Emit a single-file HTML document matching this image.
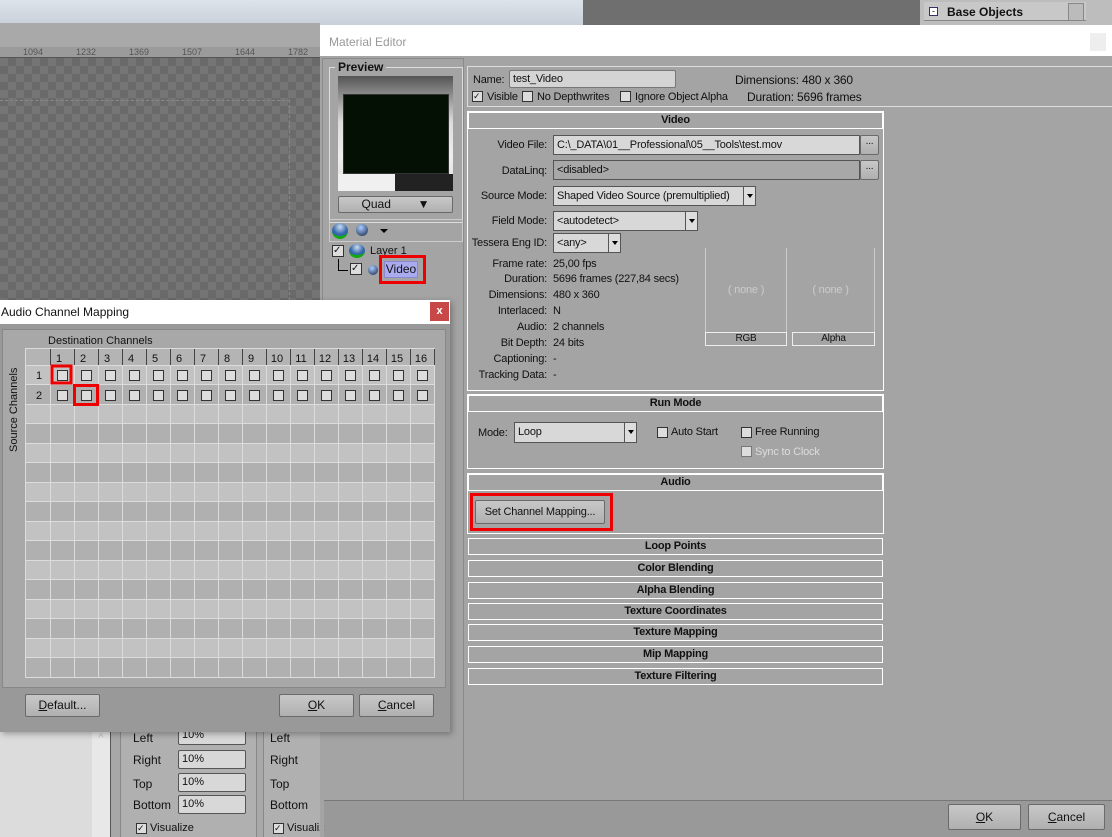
<!DOCTYPE html>
<html><head><meta charset="utf-8"><style>
*{box-sizing:border-box;margin:0;padding:0}
body{width:1112px;height:837px;overflow:hidden;position:relative;background:#a4a4a4;font-family:"Liberation Sans",sans-serif;font-size:11px;color:#111}
.a{position:absolute}
.me{letter-spacing:-0.2px}
.btn{position:absolute;border:1px solid #6a6a6a;border-radius:2px;background:linear-gradient(#c8c8c8,#b0b0b0);text-align:center;font-size:12px}
.cb{position:absolute;width:11px;height:11px;border:1px solid #333;background:#ddd}
.sec{position:absolute;left:468px;width:415px;height:17px;border:1px solid #fff;text-align:center;font-weight:bold;font-size:11px;line-height:15px}
.r{position:absolute;text-align:right;width:80px;left:467px}
.v{position:absolute;left:553px}
.inp{position:absolute;background:#d8d8d8;border:1px solid #555;font-size:11px;padding-left:3px;line-height:18px;height:20px}
.dd{position:absolute;right:0;top:0;width:12px;height:100%;border-left:1px solid #555;background:#ddd}
.dd:after{content:"";position:absolute;left:3px;top:7px;border:3px solid transparent;border-top:4px solid #000}
</style></head><body>
<div class="a" style="left:0;top:0;width:583px;height:25px;background:linear-gradient(#dde3ea,#c8d0da)"></div>
<div class="a" style="left:583px;top:0;width:337px;height:25px;background:#6f6f6f"></div>
<div class="a" style="left:920px;top:0;width:192px;height:25px;background:#bdbdbd"></div>
<div class="a" style="left:924px;top:2px;width:162px;height:19px;background:#c8c8c8;border-bottom:1px solid #888"></div>
<div class="a" style="left:929px;top:7px;width:9px;height:9px;border:1px solid #336;background:#fff;font-size:9px;line-height:6px;text-align:center">-</div>
<div class="a" style="left:947px;top:5px;font-weight:bold;font-size:12px">Base Objects</div>
<div class="a" style="left:1068px;top:3px;width:16px;height:18px;background:#bbb;border:1px solid #888"></div>
<div class="a" style="left:0;top:23px;width:320px;height:24px;background:#a9a9a9"></div>
<div class="a" style="left:0;top:47px;width:320px;height:11px;background:#9b9b9b;border-bottom:1px solid #555;font-size:9px;color:#555">
<span class="a" style="left:23px;top:0">1094</span><span class="a" style="left:76px">1232</span><span class="a" style="left:129px">1369</span><span class="a" style="left:182px">1507</span><span class="a" style="left:235px">1644</span><span class="a" style="left:288px">1782</span></div>
<div class="a" style="left:0;top:58px;width:320px;height:242px;background-color:#757575;background-image:linear-gradient(45deg,#6a6a6a 25%,transparent 25%,transparent 75%,#6a6a6a 75%),linear-gradient(45deg,#6a6a6a 25%,transparent 25%,transparent 75%,#6a6a6a 75%);background-size:16px 16px;background-position:0 0,8px 8px"></div>
<div class="a" style="left:0;top:100px;width:290px;height:200px;border-top:1px dashed #888;border-right:1px dashed #888"></div>

<div class="a" style="left:320px;top:25px;width:792px;height:812px;background:#a4a4a4"></div>
<div class="a" style="left:320px;top:25px;width:792px;height:31px;background:#fff;color:#999;font-size:12px;padding:10px 0 0 9px">Material Editor</div>
<div class="a" style="left:1090px;top:33px;width:16px;height:18px;background:#eee"></div>
<div class="a" style="left:322px;top:58px;width:142px;height:762px;border:1px solid #8a8a8a"></div>
<div class="a" style="left:329px;top:67px;width:134px;height:156px;border:1px solid #ddd"></div>
<div class="a" style="left:335px;top:60px;background:#a4a4a4;padding:0 3px;font-weight:bold;font-size:12px">Preview</div>
<div class="a" style="left:338px;top:76px;width:115px;height:115px;background:linear-gradient(#555,#ddd 40%,#eee 70%,#ddd)"></div>
<div class="a" style="left:343px;top:94px;width:106px;height:80px;background:#051005;border:1px solid #333"></div>
<div class="a" style="left:338px;top:174px;width:57px;height:17px;background:#f0f0f0"></div><div class="a" style="left:395px;top:174px;width:58px;height:17px;background:#222"></div>
<div class="btn" style="left:338px;top:196px;width:115px;height:17px;line-height:15px">Quad &nbsp; &nbsp; &nbsp; &nbsp;&#9660;</div>
<div class="a" style="left:329px;top:219px;width:134px;height:23px;border:1px solid #ccc"></div>
<div class="a" style="left:332px;top:223px;width:16px;height:16px;border-radius:50%;background:radial-gradient(circle at 50% 30%,#cde,#36a 60%);border-bottom:3px solid #1a1"></div>
<div class="a" style="left:356px;top:224px;width:12px;height:12px;border-radius:50%;background:radial-gradient(circle at 40% 30%,#acf,#124)"></div>
<div class="a" style="left:380px;top:229px;border:4px solid transparent;border-top:4px solid #000"></div>
<div class="cb" style="left:332px;top:245px;width:12px;height:12px;font-size:10px;line-height:9px">✓</div>
<div class="a" style="left:349px;top:244px;width:16px;height:14px;border-radius:50%;background:radial-gradient(circle at 50% 30%,#cde,#36a 60%);border-bottom:3px solid #1a1"></div>
<div class="a" style="left:370px;top:245px">Layer 1</div>
<div class="a" style="left:338px;top:259px;width:10px;height:12px;border-left:1px solid #000;border-bottom:1px solid #000"></div>
<div class="cb" style="left:350px;top:263px;width:12px;height:12px;font-size:10px;line-height:9px">✓</div>
<div class="a" style="left:368px;top:265px;width:10px;height:10px;border-radius:50%;background:radial-gradient(circle at 40% 30%,#acf,#124)"></div>
<div class="a" style="left:379px;top:255px;width:47px;height:29px;border:3px solid #e00"></div>
<div class="a" style="left:384px;top:261px;width:34px;height:17px;background:#aaaaee;border:1px solid #88c;font-size:12px;text-align:center;line-height:15px">Video</div>

<div class="me">
<div class="a" style="left:467px;top:66px;width:646px;height:41px;border:1px solid #ddd;border-right:none"></div>
<div class="a" style="left:473px;top:74px">Name:</div>
<div class="inp" style="left:509px;top:70px;width:167px;height:18px;border-color:#777;background:#d4d4d4;border-radius:2px;line-height:16px">test_Video</div>
<div class="a" style="left:735px;top:73px;font-size:12px">Dimensions: 480 x 360</div>
<div class="cb" style="left:472px;top:91px;font-size:9px;line-height:8px">✓</div><div class="a" style="left:487px;top:91px">Visible</div>
<div class="cb" style="left:522px;top:91px"></div><div class="a" style="left:537px;top:91px">No Depthwrites</div>
<div class="cb" style="left:620px;top:91px"></div><div class="a" style="left:635px;top:91px">Ignore Object Alpha</div>
<div class="a" style="left:747px;top:90px;font-size:12px">Duration: 5696 frames</div>

<div class="a" style="left:467px;top:111px;width:417px;height:280px;border:1px solid #fff"></div>
<div class="sec" style="top:112px">Video</div>
<div class="r" style="top:139px">Video File:</div>
<div class="inp" style="left:553px;top:135px;width:307px">C:\_DATA\01__Professional\05__Tools\test.mov</div>
<div class="btn" style="left:860px;top:135px;width:19px;height:20px;font-size:10px">...</div>
<div class="r" style="top:165px">DataLinq:</div>
<div class="inp" style="left:553px;top:160px;width:307px;background:#a8a8a8">&lt;disabled&gt;</div>
<div class="btn" style="left:860px;top:160px;width:19px;height:20px;font-size:10px">...</div>
<div class="r" style="top:190px">Source Mode:</div>
<div class="inp" style="left:553px;top:186px;width:203px">Shaped Video Source (premultiplied)<div class="dd"></div></div>
<div class="r" style="top:215px">Field Mode:</div>
<div class="inp" style="left:553px;top:211px;width:145px">&lt;autodetect&gt;<div class="dd"></div></div>
<div class="r" style="top:237px">Tessera Eng ID:</div>
<div class="inp" style="left:553px;top:233px;width:68px">&lt;any&gt;<div class="dd"></div></div>
<div class="r" style="top:258px">Frame rate:</div><div class="v" style="top:258px">25,00 fps</div>
<div class="r" style="top:273px">Duration:</div><div class="v" style="top:273px">5696 frames (227,84 secs)</div>
<div class="r" style="top:289px">Dimensions:</div><div class="v" style="top:289px">480 x 360</div>
<div class="r" style="top:305px">Interlaced:</div><div class="v" style="top:305px">N</div>
<div class="r" style="top:321px">Audio:</div><div class="v" style="top:321px">2 channels</div>
<div class="r" style="top:337px">Bit Depth:</div><div class="v" style="top:337px">24 bits</div>
<div class="r" style="top:353px">Captioning:</div><div class="v" style="top:353px">-</div>
<div class="r" style="top:369px">Tracking Data:</div><div class="v" style="top:369px">-</div>
<div class="a" style="left:705px;top:248px;width:82px;height:84px;border-left:1px solid #ccc;border-right:1px solid #ccc;color:#ccc;text-align:center;line-height:84px">( none )</div>
<div class="a" style="left:705px;top:332px;width:82px;height:14px;border:1px solid #eee;text-align:center;font-size:10px;line-height:12px">RGB</div>
<div class="a" style="left:787px;top:248px;width:88px;height:84px;border-right:1px solid #ccc;color:#ccc;text-align:center;line-height:84px">( none )</div>
<div class="a" style="left:792px;top:332px;width:83px;height:14px;border:1px solid #eee;text-align:center;font-size:10px;line-height:12px">Alpha</div>

<div class="a" style="left:467px;top:394px;width:417px;height:75px;border:1px solid #fff"></div>
<div class="sec" style="top:395px">Run Mode</div>
<div class="a" style="left:478px;top:427px">Mode:</div>
<div class="inp" style="left:514px;top:422px;width:123px;height:21px;line-height:19px">Loop<div class="dd"></div></div>
<div class="cb" style="left:657px;top:427px"></div><div class="a" style="left:671px;top:426px">Auto Start</div>
<div class="cb" style="left:741px;top:427px"></div><div class="a" style="left:755px;top:426px">Free Running</div>
<div class="cb" style="left:741px;top:446px;border-color:#777"></div><div class="a" style="left:755px;top:446px;color:#ddd">Sync to Clock</div>

<div class="a" style="left:467px;top:473px;width:417px;height:61px;border:1px solid #fff"></div>
<div class="sec" style="top:474px">Audio</div>
<div class="a" style="left:470px;top:493px;width:143px;height:38px;border:3px solid #e00"></div>
<div class="btn" style="left:475px;top:500px;width:130px;height:24px;line-height:22px;font-size:11px">Set Channel Mapping...</div>
<div class="sec" style="top:538px">Loop Points</div>
<div class="sec" style="top:560px">Color Blending</div>
<div class="sec" style="top:582px">Alpha Blending</div>
<div class="sec" style="top:603px">Texture Coordinates</div>
<div class="sec" style="top:624px">Texture Mapping</div>
<div class="sec" style="top:646px">Mip Mapping</div>
<div class="sec" style="top:668px">Texture Filtering</div>
</div>

<div class="a" style="left:320px;top:800px;width:792px;height:37px;background:#999;border-top:1px solid #777"></div>
<div class="btn" style="left:948px;top:804px;width:73px;height:26px;line-height:24px"><u>O</u>K</div>
<div class="btn" style="left:1028px;top:804px;width:77px;height:26px;line-height:24px"><u>C</u>ancel</div>

<div class="a" style="left:0;top:732px;width:92px;height:105px;background:#dcdcdc"></div>
<div class="a" style="left:92px;top:732px;width:18px;height:105px;background:#e8e8e8;color:#bbb;text-align:center">^</div>
<div class="a" style="left:110px;top:732px;width:210px;height:105px;background:#a8a8a8;border-left:1px solid #555"></div>
<div class="a" style="left:120px;top:732px;width:137px;height:105px;background:#b0b0b0;border-left:1px solid #888;border-right:1px solid #888"></div>
<div class="a" style="left:263px;top:732px;width:57px;height:105px;background:#b0b0b0;border-left:1px solid #888"></div>
<div style="font-size:12px">
<div class="a" style="left:133px;top:731px">Left</div><div class="a" style="left:133px;top:753px">Right</div><div class="a" style="left:133px;top:777px">Top</div><div class="a" style="left:133px;top:798px">Bottom</div>
<div class="a" style="left:270px;top:731px">Left</div><div class="a" style="left:270px;top:753px">Right</div><div class="a" style="left:270px;top:777px">Top</div><div class="a" style="left:270px;top:798px">Bottom</div>
<div class="inp" style="left:178px;top:750px;width:68px;height:19px;border-radius:2px;line-height:17px">10%</div>
<div class="inp" style="left:178px;top:773px;width:68px;height:19px;border-radius:2px;line-height:17px">10%</div>
<div class="inp" style="left:178px;top:795px;width:68px;height:19px;border-radius:2px;line-height:17px">10%</div>
<div class="inp" style="left:178px;top:726px;width:68px;height:19px;border-radius:2px;line-height:17px">10%</div>
<div class="cb" style="left:136px;top:823px;font-size:9px;line-height:8px">✓</div><div class="a" style="left:150px;top:822px;font-size:11px">Visualize</div>
<div class="cb" style="left:273px;top:823px;font-size:9px;line-height:8px">✓</div><div class="a" style="left:287px;top:822px;font-size:11px">Visualiz</div>
</div>
<div class="a" style="left:320px;top:732px;width:4px;height:105px;background:#a4a4a4"></div>

<div class="a" style="left:0;top:300px;width:450px;height:432px;background:#999;box-shadow:2px 2px 6px rgba(0,0,0,.3)"></div>
<div class="a" style="left:0;top:300px;width:450px;height:24px;background:#fff;font-size:12px;padding:5px 0 0 1px">Audio Channel Mapping</div>
<div class="a" style="left:430px;top:302px;width:19px;height:19px;background:#c84848;color:#fff;font-weight:bold;text-align:center;line-height:18px;font-size:11px">x</div>
<div class="a" style="left:2px;top:329px;width:444px;height:359px;background:#a8a8a8;border:1px solid #888"></div>
<div class="a" style="left:48px;top:335px;font-size:11px">Destination Channels</div>
<div class="a" style="left:8px;top:452px;transform:rotate(-90deg);transform-origin:0 0;font-size:11px;white-space:nowrap">Source Channels</div>
<svg class="a" style="left:25px;top:348px" width="410" height="330">
<rect x="0" y="0" width="410" height="330" fill="#b8b8b8"/>
<rect x="0" y="0" width="410" height="17" fill="#b4b4b4"/>
<g fill="#c2c2c2">
<rect y="17" width="410" height="19.5"/><rect y="56" width="410" height="19.5"/><rect y="95" width="410" height="19.5"/><rect y="134" width="410" height="19.5"/><rect y="173" width="410" height="19.5"/><rect y="212" width="410" height="19.5"/><rect y="251" width="410" height="19.5"/><rect y="290" width="410" height="19.5"/>
</g>
<g fill="#b0b0b0">
<rect y="36.5" width="410" height="19.5"/><rect y="75.5" width="410" height="19.5"/><rect y="114.5" width="410" height="19.5"/><rect y="153.5" width="410" height="19.5"/><rect y="192.5" width="410" height="19.5"/><rect y="231.5" width="410" height="19.5"/><rect y="270.5" width="410" height="19.5"/><rect y="309.5" width="410" height="20"/>
</g>
<g stroke="#dcdcdc" stroke-width="1">
<path d="M0.5 0V330M25.5 0V330M49.5 0V330M73.5 0V330M97.5 0V330M121.5 0V330M145.5 0V330M169.5 0V330M193.5 0V330M217.5 0V330M241.5 0V330M265.5 0V330M289.5 0V330M313.5 0V330M337.5 0V330M361.5 0V330M385.5 0V330M409.5 0V330"/>
<path d="M0 0.5H410M0 17.5H410M0 36.5H410M0 56.5H410M0 75.5H410M0 95.5H410M0 114.5H410M0 134.5H410M0 153.5H410M0 173.5H410M0 192.5H410M0 212.5H410M0 231.5H410M0 251.5H410M0 270.5H410M0 290.5H410M0 309.5H410M0 329.5H410"/>
</g>
<g stroke="#444" stroke-width="1" fill="none"><path d="M25.5 1V17M49.5 1V17M73.5 1V17M97.5 1V17M121.5 1V17M145.5 1V17M169.5 1V17M193.5 1V17M217.5 1V17M241.5 1V17M265.5 1V17M289.5 1V17M313.5 1V17M337.5 1V17M361.5 1V17M385.5 1V17M409.5 1V17"/></g>
<g font-family="Liberation Sans" font-size="11" fill="#111" text-anchor="middle">
<text x="34" y="14">1</text><text x="58" y="14">2</text><text x="82" y="14">3</text><text x="106" y="14">4</text><text x="130" y="14">5</text><text x="154" y="14">6</text><text x="178" y="14">7</text><text x="202" y="14">8</text><text x="226" y="14">9</text><text x="252" y="14">10</text><text x="276" y="14">11</text><text x="300" y="14">12</text><text x="324" y="14">13</text><text x="348" y="14">14</text><text x="372" y="14">15</text><text x="396" y="14">16</text>
<text x="14" y="31">1</text><text x="14" y="51">2</text>
</g>
<g fill="#ddd" stroke="#333">
<rect x="32.5" y="22.5" width="10" height="10"/><rect x="56.5" y="22.5" width="10" height="10"/><rect x="80.5" y="22.5" width="10" height="10"/><rect x="104.5" y="22.5" width="10" height="10"/><rect x="128.5" y="22.5" width="10" height="10"/><rect x="152.5" y="22.5" width="10" height="10"/><rect x="176.5" y="22.5" width="10" height="10"/><rect x="200.5" y="22.5" width="10" height="10"/><rect x="224.5" y="22.5" width="10" height="10"/><rect x="248.5" y="22.5" width="10" height="10"/><rect x="272.5" y="22.5" width="10" height="10"/><rect x="296.5" y="22.5" width="10" height="10"/><rect x="320.5" y="22.5" width="10" height="10"/><rect x="344.5" y="22.5" width="10" height="10"/><rect x="368.5" y="22.5" width="10" height="10"/><rect x="392.5" y="22.5" width="10" height="10"/>
<rect x="32.5" y="42.5" width="10" height="10"/><rect x="56.5" y="42.5" width="10" height="10"/><rect x="80.5" y="42.5" width="10" height="10"/><rect x="104.5" y="42.5" width="10" height="10"/><rect x="128.5" y="42.5" width="10" height="10"/><rect x="152.5" y="42.5" width="10" height="10"/><rect x="176.5" y="42.5" width="10" height="10"/><rect x="200.5" y="42.5" width="10" height="10"/><rect x="224.5" y="42.5" width="10" height="10"/><rect x="248.5" y="42.5" width="10" height="10"/><rect x="272.5" y="42.5" width="10" height="10"/><rect x="296.5" y="42.5" width="10" height="10"/><rect x="320.5" y="42.5" width="10" height="10"/><rect x="344.5" y="42.5" width="10" height="10"/><rect x="368.5" y="42.5" width="10" height="10"/><rect x="392.5" y="42.5" width="10" height="10"/>
</g>
<g fill="none" stroke="#e00" stroke-width="3"><rect x="27" y="18" width="19" height="17"/><rect x="49.5" y="37.5" width="23" height="19"/></g>
</svg>
<div class="btn" style="left:25px;top:694px;width:75px;height:23px;line-height:21px"><u>D</u>efault...</div>
<div class="btn" style="left:279px;top:694px;width:75px;height:23px;line-height:21px"><u>O</u>K</div>
<div class="btn" style="left:359px;top:694px;width:75px;height:23px;line-height:21px"><u>C</u>ancel</div>
</body></html>
